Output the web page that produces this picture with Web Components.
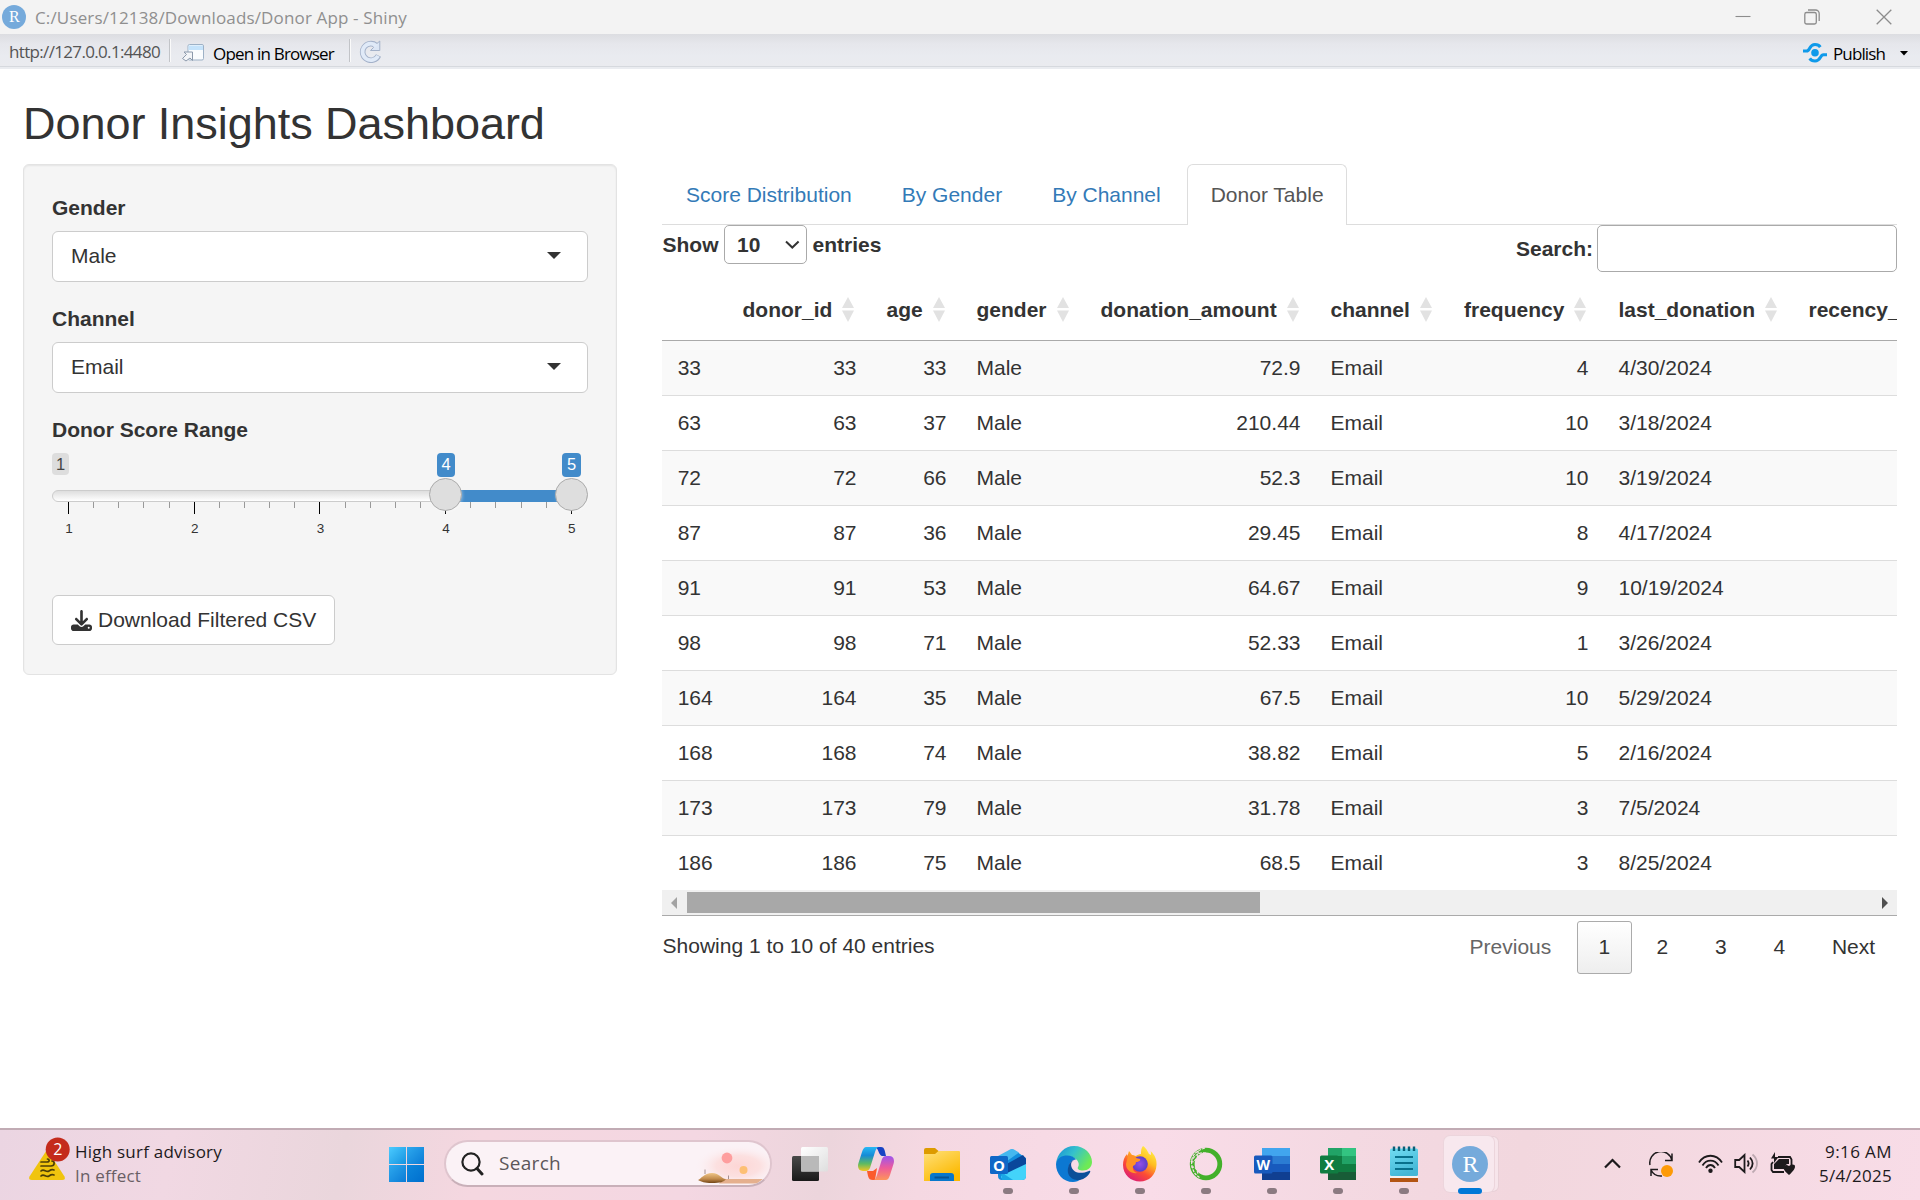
<!DOCTYPE html>
<html lang="en">
<head>
<meta charset="utf-8">
<title>Donor App - Shiny</title>
<style>
html,body{margin:0;padding:0;background:#fff}
body{width:1920px;height:1200px;overflow:hidden;font-family:"Liberation Sans",Arial,sans-serif;color:#333}
</style>
</head>
<body>
<app-window></app-window>
<script>
function define(name, css, html, setup) {
  const tpl = document.createElement('template');
  tpl.innerHTML = `<style>*{box-sizing:border-box}:host{display:block;box-sizing:border-box}svg{display:block}${css}</style>${html}`;
  customElements.define(name, class extends HTMLElement {
    connectedCallback() {
      if (this.shadowRoot) return;
      const root = this.attachShadow({mode: 'open'});
      root.appendChild(tpl.content.cloneNode(true));
      if (setup) setup.call(this, root);
    }
  });
}

/* One line of system text, letter-spaced to a fixed advance width. */
define('ui-text', `
:host{display:block;white-space:nowrap;font-family:"Open Sans","Noto Sans",sans-serif;font-size:17px;line-height:24px;flex:none}
span{display:inline-block}`, `<span><slot></slot></span>`, function (root) {
  const w = +this.getAttribute('w'), span = root.querySelector('span');
  const n = this.textContent.length;
  this.style.width = w + 'px';
  span.style.letterSpacing = ((w - span.getBoundingClientRect().width) / n) + 'px';
});

define('r-logo', `:host{flex:none}svg{width:100%;height:100%}`, `
<svg viewBox="0 0 36 36"><circle cx="18" cy="18" r="18" fill="#75aadb"/>
<text x="18.5" y="26" text-anchor="middle" font-family="Liberation Serif" font-size="24" fill="#fff">R</text></svg>`);

define('title-bar', `
:host{display:flex;height:34px;background:#f3f3f3;align-items:center;padding:0 29px 0 2px}
r-logo{width:24px;height:24px;margin-bottom:1px}
ui-text{margin-left:9px;color:#8f8f8f;position:relative;top:1px}
.ctl{margin-left:auto;display:flex;gap:54px;margin-bottom:1px}
svg{width:16px;height:16px;fill:none;stroke:#8c8c8c;stroke-width:1.1}`, `
<r-logo></r-logo><ui-text w="372">C:/Users/12138/Downloads/Donor App - Shiny</ui-text>
<div class="ctl">
<svg viewBox="0 0 16 16"><path d="M.5 7.5h15"/></svg>
<svg viewBox="0 0 16 16" style="margin-right:2px;margin-left:-1px"><rect x=".8" y="3.5" width="11.5" height="11.5" rx="1.8" stroke-width="1.3"/><path stroke-width="1.3" d="M4 1h7.5a3.7 3.7 0 0 1 3.7 3.7V12"/></svg>
<svg viewBox="0 0 16 16" style="margin-right:-1px"><path stroke-width="1.3" d="M.7.7l14.6 14.6M15.3.7L.7 15.3"/></svg>
</div>`);

define('tool-bar', `
:host{display:flex;height:35px;background:linear-gradient(#dcdde1 0,#e6e7ec 10px,#e9ebf0 22px,#eaebef 32px,#d6d9de 32px,#d6d9de 33px,#eaecf0 33px);align-items:flex-start}
ui-text{color:#000}
.url{margin:6px 0 0 9px;color:#555}
i{width:2px;height:23px;margin:5px 0 0 9px;background:linear-gradient(90deg,#c2c4c8 50%,#fafafa 50%);flex:none}
svg{flex:none}`, `
<ui-text class="url" w="151">http://127.0.0.1:4480</ui-text><i></i>
<svg style="margin:9px 0 0 10px" width="24" height="20" viewBox="0 0 24 20"><rect x="7" y="1.5" width="15.500" height="15.500" rx="1.500" fill="#fafcfe" stroke="#9db1c6"/><path d="M7.500 2.500h14.500v4.500H7.500z" fill="#c5e3fb"/><path d="M1.500 15.500l4-4-2.500-2.500h8.500v8.500L9 15l-4 3z" fill="#f3f5f8" stroke="#8c99ab"/></svg>
<ui-text w="121" style="margin:8px 0 0 8px">Open in Browser</ui-text><i style="margin-left:15px"></i>
<svg style="margin:6px 0 0 8px" width="23" height="23" viewBox="0 0 23 23"><path d="M17.200 5.500A8.300 8.300 0 1 0 19.500 15.500" fill="none" stroke="#a3b1c9" stroke-width="5.600"/><path d="M20.800 1v9.500h-9.300l3-3-1.500-2 4-1.200z" fill="#dce6f5" stroke="#a3b1c9"/><path d="M17.700 6A8.300 8.300 0 1 0 19.100 15.900" fill="none" stroke="#e0eaf8" stroke-width="3.800"/></svg>
<svg style="margin:8px 0 0 auto" width="26" height="22" viewBox="0 0 26 22"><circle cx="13" cy="10.800" r="3.800" fill="#0f9aea"/><g fill="none" stroke="#0f9aea" stroke-width="3"><path d="M1 9h3.500c1.500 0 2.200-.8 3-2.500C9 3.500 11 2.500 13 2.500c2.200 0 4.200.8 5.300 2.600"/><path d="M25 12.800h-3.500c-1.500 0-2.200.8-3 2.500-1.500 2.700-3.500 3.700-5.500 3.700-2.200 0-4.200-.8-5.300-2.600"/></g></svg>
<ui-text w="52" style="margin:8px 0 0 5px">Publish</ui-text>
<svg style="margin:17px 12px 0 15px" width="8" height="5"><path d="M0 0h8L4 4.500z"/></svg>`);

define('select-input', `
:host{margin-bottom:22px;font-size:21px;line-height:30px}
label{display:block;font-weight:700;margin-bottom:8px}
div{display:flex;justify-content:space-between;align-items:center;height:51px;background:#fff;border:1px solid #ccc;border-radius:6px;padding:0 26px 2px 18px}`, `
<label></label><div><slot></slot><svg width="14" height="7"><path d="M0 0h14L7 7z" fill="#333"/></svg></div>`, function (root) {
  root.querySelector('label').textContent = this.getAttribute('label');
});

define('range-slider', `
:host{font-size:21px;line-height:30px;height:180px}
label{display:block;font-weight:700;margin-bottom:8px}
.rs{position:relative;height:90px;width:536px}
.rs>*{position:absolute}
.tag{top:0;font-size:16.5px;line-height:22px;height:22px;border-radius:4px;text-align:center;width:17px;background:#ddd;color:#444}
.v{background:#428bca;color:#fff;height:24px;line-height:23px;width:18px}
.track{top:37px;left:0;width:536px;height:12px;border:1px solid #ccc;border-radius:8px;background:linear-gradient(#dedede,#fff)}
.bar{top:37px;left:394px;width:126px;height:12px;background:#428bca}
.h{top:25px;width:33px;height:33px;border-radius:50%;background:#dedede;border:1px solid #ababab;box-shadow:1px 1px 3px rgba(255,255,255,.3)}
.t{top:49px;width:1px;height:6px;background:#999}
.t.b{height:12px;background:#000}
.n{top:66px;width:20px;text-align:center;font-size:13.5px;line-height:20px}`, `
<label>Donor Score Range</label><div class="rs"><span class="tag" style="left:0">1</span>
<span class="tag v" style="left:385px">4</span><span class="tag v" style="left:510px;width:19px">5</span>
<div class="track"></div><div class="bar"></div></div>`, function (root) {
  const rs = root.querySelector('.rs');
  const add = (cls, left, text) => { const e = document.createElement('span'); e.className = cls; e.style.left = left + 'px'; e.textContent = text || ''; rs.append(e); };
  for (let i = 0; i <= 20; i++) {
    const x = 16.5 + i * 125.7 / 5;
    add(i % 5 ? 't' : 't b', Math.round(x - .5));
    if (i % 5 === 0) add('n', x - 9.5, String(1 + i / 5));
  }
  add('h', 377); add('h', 503);
});

define('side-panel', `
:host{width:594px;height:511px;background:#f5f5f5;border:1px solid #e3e3e3;border-radius:6px;padding:28px;box-shadow:inset 0 1px 2px rgba(0,0,0,.07);flex:none}
button{display:flex;align-items:center;height:50px;width:283px;border:1px solid #ccc;border-radius:6px;background:#fff;font:21px/30px "Liberation Sans",Arial,sans-serif;color:#333;padding:0 0 0 18px;gap:6px;white-space:nowrap}`, `
<select-input label="Gender">Male</select-input><select-input label="Channel">Email</select-input>
<range-slider></range-slider>
<button><svg width="21" height="21" viewBox="0 0 512 512" fill="#333"><path d="M288 32c0-17.700-14.300-32-32-32s-32 14.300-32 32v242.700l-73.400-73.400c-12.500-12.500-32.800-12.500-45.300 0s-12.500 32.800 0 45.300l128 128c12.500 12.500 32.800 12.500 45.300 0l128-128c12.500-12.500 12.500-32.800 0-45.300s-32.800-12.500-45.300 0L288 274.700V32zM64 352c-35.300 0-64 28.700-64 64v32c0 35.300 28.700 64 64 64h384c35.300 0 64-28.700 64-64v-32c0-35.300-28.700-64-64-64H346.500l-45.300 45.300c-25 25-65.500 25-90.500 0L165.500 352H64zm368 56a24 24 0 1 1 0 48 24 24 0 1 1 0-48z"/></svg><span>Download Filtered CSV</span></button>`);

define('tab-strip', `
:host{display:flex;gap:3px;height:61px;box-shadow:inset 0 -1px #ddd;font-size:21px;line-height:30px}
a{padding:15px 22px 15px 23px;border:1px solid transparent;border-bottom:0;color:#337ab7;white-space:nowrap}
a.on{color:#555;background:#fff;border-color:#ddd;border-radius:6px 6px 0 0}`, `
<a>Score Distribution</a><a>By Gender</a><a>By Channel</a><a class="on">Donor Table</a>`);

define('sort-icon', `:host{display:inline-block;width:12px;height:25px}`, `
<svg width="12" height="25"><path d="M0 11L6 0l6 11zM0 13.500h12L6 25z" fill="#e2e2e2"/></svg>`);

define('donor-table', `
:host{font-size:21px;line-height:30px}
.top{display:flex;justify-content:space-between;align-items:flex-start;height:47px;font-weight:700;padding-left:.5px}
.len,.find{display:flex;align-items:center;gap:5.5px}
.len{height:39px}.find{height:47px;gap:4px}
.sel{display:flex;align-items:center;justify-content:space-between;width:83px;height:39px;border:1px solid #aaa;border-radius:5px;padding:0 6px 0 12px}
.box{width:300px;height:47px;border:1px solid #aaa;border-radius:5px;background:#fff}
.view{width:1235px;overflow:hidden;border-bottom:1px solid #aaa}
table{border-collapse:separate;border-spacing:0;table-layout:fixed;width:1459.5px}
th{padding:23px 0 15px 15px;text-align:left;border-bottom:1px solid #aaa;white-space:nowrap;height:69px}
.hd{display:flex;align-items:center;gap:10px;height:30px}
sort-icon{margin-top:-1px}
td{padding:12px 15px;border-bottom:1px solid #ddd;height:55px}
td:first-child{padding-left:15.700px}
tr:last-child td{border-bottom:0;height:54px}
tbody tr:nth-child(odd){background:#f9f9f9}
.r{text-align:right}
.bar{display:flex;align-items:center;justify-content:space-between;height:25px;background:#f0f0f0;padding:0 9px}
.thumb{width:573px;height:21px;background:#a8a8a8;margin:0 auto 0 10px}
.foot{display:flex;justify-content:space-between;padding-top:5px}
.info{padding:9.500px 0 0 .6px}
.pg{display:flex;gap:3px}
.pg a{height:53px;padding:10px 20.900px;border:1px solid transparent;border-radius:3px}
.pg a.off{color:#666;margin-right:1px}
.pg a.on{border-color:#ababab;background:linear-gradient(#fff,#eee);padding:10px 20.400px}`, `
<div class="top"><div class="len"><span>Show</span><div class="sel"><span>10</span><svg width="15" height="9"><path d="M1 1.500l6.300 6 6.300-6" fill="none" stroke="#333" stroke-width="2"/></svg></div><span>entries</span></div>
<div class="find"><span>Search:</span><div class="box"></div></div></div>
<div class="view"><table><colgroup></colgroup><thead><tr></tr></thead><tbody></tbody></table>
<div class="bar"><svg width="6" height="12"><path d="M6 0v12L0 6z" fill="#a3a3a3"/></svg><div class="thumb"></div><svg width="6" height="12"><path d="M0 0v12l6-6z" fill="#505050"/></svg></div></div>
<div class="foot"><div class="info">Showing 1 to 10 of 40 entries</div><div class="pg"><a class="off">Previous</a><a class="on">1</a><a>2</a><a>3</a><a>4</a><a>Next</a></div></div>`, function (root) {
  const cols = [['', 65.5], ['donor_id', 144], ['age', 90], ['gender', 124], ['donation_amount', 230], ['channel', 133.5], ['frequency', 154.5], ['last_donation', 190], ['recency_', 328]];
  root.querySelector('colgroup').innerHTML = cols.map(c => `<col style="width:${c[1]}px">`).join('');
  root.querySelector('thead tr').innerHTML = cols.map(c => `<th><div class="hd">${c[0] ? `<span>${c[0]}</span>${c[0] === 'recency_' ? '' : '<sort-icon></sort-icon>'}` : ''}</div></th>`).join('');
  const rows = [[33,33,'72.9',4,'4/30/2024'],[63,37,'210.44',10,'3/18/2024'],[72,66,'52.3',10,'3/19/2024'],[87,36,'29.45',8,'4/17/2024'],[91,53,'64.67',9,'10/19/2024'],[98,71,'52.33',1,'3/26/2024'],[164,35,'67.5',10,'5/29/2024'],[168,74,'38.82',5,'2/16/2024'],[173,79,'31.78',3,'7/5/2024'],[186,75,'68.5',3,'8/25/2024']];
  root.querySelector('tbody').innerHTML = rows.map(([id, age, amt, f, d]) => `<tr><td>${id}</td><td class="r">${id}</td><td class="r">${age}</td><td>Male</td><td class="r">${amt}</td><td>Email</td><td class="r">${f}</td><td>${d}</td><td></td></tr>`).join('');
});

define('shiny-page', `
:host{height:1059px;padding:30px 23px 0;background:#fff}
h2{margin:0 0 15px;font-size:45px;line-height:50px;font-weight:400;color:#333;letter-spacing:-.04px}
.row{display:flex;gap:45px;align-items:flex-start}
main{width:1235px}`, `
<h2>Donor Insights Dashboard</h2><div class="row"><side-panel></side-panel><main><tab-strip></tab-strip><donor-table></donor-table></main></div>`);

define('search-pill', `
:host{display:flex;align-items:center;width:328px;height:47px;border:2px solid #dfc5ce;border-bottom-color:#c9b0b9;border-radius:24px;background:#fbf2f6;overflow:hidden;padding-left:15px;flex:none}
ui-text{font-size:19px;color:#5c5659;margin:-2px auto 0 15px}`, `
<svg width="23" height="24" viewBox="0 0 23 24"><circle cx="10" cy="10" r="8.600" fill="none" stroke="#222" stroke-width="2.200"/><path d="M16 16.500l5 5.500" stroke="#222" stroke-width="3" stroke-linecap="round"/></svg>
<ui-text w="62">Search</ui-text>
<svg width="76" height="43" viewBox="0 0 76 43"><defs><radialGradient id="g"><stop offset="0" stop-color="#fdd6d5"/><stop offset=".5" stop-color="#fce0e0"/><stop offset="1" stop-color="#fbf2f6" stop-opacity="0"/></radialGradient><linearGradient id="s" x2="0" y2="1"><stop stop-color="#efc588"/><stop offset=".6" stop-color="#c18a4b"/><stop offset="1" stop-color="#714517"/></linearGradient></defs>
<ellipse cx="44" cy="24" rx="44" ry="21" fill="url(#g)"/><circle cx="33" cy="16" r="5.400" fill="#fe9e9e"/><circle cx="49.500" cy="28" r="4" fill="#fdbf74"/><path d="M29 37h40l-6 4.500H25z" fill="#e5b08e"/><path d="M4 38c3-1 6-7 14-7s9 6 14 6c-2 3-6 4-14 4-8 0-10-1-14-3z" fill="url(#s)"/><path d="M11 32v-4.500M34.500 37v-3.500" stroke="#a49090"/></svg>`);

/* A taskbar slot: icon above a running mark. */
define('task-icon', `
:host{display:flex;width:66px;height:70px;flex:none;flex-direction:column;align-items:center;padding-top:16px}
.tile{display:flex;align-items:center;justify-content:center;width:36px;height:36px}
i{width:10px;height:6px;border-radius:3px;margin-top:5.500px;background:transparent}
:host([run]) i{background:#8b7a81}
:host([active]) i{width:24px;background:#0078d7}
:host([active]) .box{background:#f8e8ee;border-radius:6px;padding:10px 7px 0;margin:-10px 3px 0 0;height:56px;box-shadow:0 0 0 1px #ecd5dc,5px 0 0 -1px #f7e5eb,5px 0 0 #e8d0d7}
:host([active]) .tile{position:relative;left:1.5px}
:host([active]) i{margin-top:-4.500px;position:relative}`, `
<div class="box"><div class="tile"><slot></slot></div></div><i></i>`);

define('weather-widget', `
:host{display:flex;width:389px;padding:14px 0 0 28px;gap:9px;flex:none}
svg{overflow:visible;flex:none}
ui-text{color:#1d1a1c}.s{color:#695f65}`, `
<svg width="42" height="44" viewBox="0 0 42 44"><path d="M17.500 8L1.500 32.500Q0 36 4 36H34q4 0 2.500-3.500L20.500 8q-1.500-2-3 0z" fill="#f0c40e"/><g fill="none" stroke="#4c3e07" stroke-width="1.700" stroke-linecap="round"><path d="M13 22h10c4 0 4-5 1-5M13 18h6c3 0 2.500-3 .5-3M13 27c3-3 5 2 8 0s3-1.500 5-1M13 32c3-3 5 2 8 0s3-1.500 5-1"/></g><circle cx="29.700" cy="5.500" r="12" fill="#c42b1c"/><text x="29.900" y="11.300" font-family="Open Sans" font-size="16" text-anchor="middle" fill="#fff">2</text></svg>
<div style="margin:-4px 0 0 -4px"><ui-text w="147">High surf advisory</ui-text><ui-text w="66" class="s">In effect</ui-text></div>`);

define('system-tray', `
:host{display:flex;align-items:flex-start;margin-left:auto;padding-right:28px;height:70px;flex:none}
svg{flex:none;fill:none;stroke:#1d1a1c;stroke-width:1.800}
.c{display:flex;flex-direction:column;align-items:flex-end;margin:10px 0 0 23px;width:73px}
ui-text{color:#1d1a1c}`, `
<svg style="margin:28px 28px 0 0" width="17" height="11"><path d="M1 9.500l7.500-7.500 7.500 7.500" stroke-width="2.200"/></svg>
<svg style="margin:22px 24px 0 0" width="25" height="26"><path stroke-width="1.500" d="M1 13A11 11 0 0 1 23 8.500M23 1.500v7h-7M2 24v-6.500h7M2 18c2 4 6 6.500 11 6"/><circle cx="18" cy="19" r="6" fill="#fd9a07" stroke="none"/></svg>
<svg style="margin:24px 11px 0 0" width="25" height="20"><path d="M1 8.500C7-.5 18-.5 24 8.500M4.500 11.500c4-6.500 12-6.500 16 0M8 14c2.500-4 6.500-4 9 0"/><circle cx="12.500" cy="16.800" r="2.200" fill="#1d1a1c" stroke="none"/></svg>
<svg style="margin:23px 11px 0 0" width="25" height="22"><path d="M1.200 7v7h4L10.500 19V2L5.200 7zM13.500 7.500c1.500 2 1.500 4 0 6M16 4.500c3.500 4 3.500 8 0 12"/><path stroke="#bda9b1" d="M18.500 1.500c6 5 6 13 0 18"/></svg>
<svg style="margin:22px 0 0 0" width="26" height="25"><path d="M8 5h12l1.500 2.500V13M3 10L1.500 12v6L3 20h11"/><path d="M9 7h10v5c-3 0-5 2-5 5H4v-5z" fill="#1d1a1c" stroke="none"/><path d="M5 0v5H8.500L4 11V6.500H1zM24.500 13q-2.500-1.200-5.500 1-3-2-5 0c-2 3 2 6 5 9 3-3 7.500-7 5.500-10z" fill="#1d1a1c" stroke="none"/></svg>
<div class="c"><ui-text w="67">9:16 AM</ui-text><ui-text w="73">5/4/2025</ui-text></div>`);

define('task-bar', `
:host{display:flex;height:72px;border-top:2px solid #c1abb4;align-items:flex-start;background:linear-gradient(100deg,#ebd5e2 0,#f1d8e3 9%,#ead6dc 18%,#f5d7e0 25%,#f4d7e2 36%,#ecd5dc 43%,#f5d8e2 48%,#f9dce8 60%,#f4d9e2 70%,#f2d7de 79%,#f8dce7 100%)}
.start{display:grid;grid-template-columns:17px 17px;gap:1px;margin:17px 20px 0 0;flex:none}
.start b{height:17px;background:linear-gradient(135deg,#4ccbff,#1593e0)}
.start b:nth-child(2),.start b:nth-child(3){background:linear-gradient(135deg,#2ea9ee,#0a7bd6)}
.start b:nth-child(4){background:linear-gradient(135deg,#0d87dc,#006fce)}
search-pill{margin:10px 5px 0 0}
r-logo{width:36px;height:36px}`, `
<weather-widget></weather-widget><div class="start"><b></b><b></b><b></b><b></b></div><search-pill></search-pill>
<task-icon><svg width="36" height="36" viewBox="0 0 36 36"><defs><linearGradient id="d" x2="0" y2="1"><stop stop-color="#494949"/><stop offset="1" stop-color="#191919"/></linearGradient><linearGradient id="w" x2="1" y2="1"><stop stop-color="#fff"/><stop offset="1" stop-color="#dedede"/></linearGradient></defs><rect y="10" width="27" height="25" rx="1.500" fill="url(#d)"/><rect x="9" y="1" width="27" height="24.500" rx="1.500" fill="url(#w)"/><path d="M9 10h18v15.500H9z" fill="#b9b9b9"/></svg></task-icon>
<task-icon><svg width="36" height="36" viewBox="0 0 36 36"><defs><linearGradient id="a" x2="0" y2="1"><stop stop-color="#27b8f5"/><stop offset=".35" stop-color="#168bd6"/><stop offset=".7" stop-color="#5fbb61"/><stop offset="1" stop-color="#f4c522"/></linearGradient><linearGradient id="b" x2="0" y2="1"><stop stop-color="#9c54ee"/><stop offset=".5" stop-color="#ee5b9a"/><stop offset="1" stop-color="#fd955a"/></linearGradient></defs><path d="M17 1h6c2 0 3 1 3.700 3.500L28 10h-4c-3 0-4-9-7-9z" fill="#1743c4"/><path d="M9 25h6l4-3-2 12h-2c-3 0-4-1-5-4z" fill="#fb5b2c"/><path d="M8.500 1H21c-2 0-3 2-4 5l-5 16c-1 2-2 3-4 3H5c-4 0-6-3-4.500-8L4 6c1-3 2-5 4.500-5z" fill="url(#a)"/><path d="M27.500 34H15c2 0 3-2 4-5l5-16c1-2 2-3 4-3h3c4 0 6 3 4.500 8L32 29c-1 3-2 5-4.500 5z" fill="url(#b)"/></svg></task-icon>
<task-icon><svg width="36" height="36" viewBox="0 0 36 36"><defs><linearGradient id="f" x2=".6" y2="1"><stop stop-color="#ffe07a"/><stop offset="1" stop-color="#fcb900"/></linearGradient></defs><path d="M0 4q0-2 2-2h9l4 3.500L11 9H0z" fill="#dd9b00"/><path d="M0 8h11l3.500-3H35q1 0 1 1v29H0z" fill="url(#f)"/><path d="M6 35V30q0-3 3-3h18q3 0 3 3v5z" fill="#0877cb"/><path d="M10.500 31.500h14.500" stroke="#065494" stroke-width="2"/></svg></task-icon>
<task-icon run><svg width="36" height="36" viewBox="0 0 36 36"><path d="M8 13L20 4q2-1.500 4 0L36 12v18q0 4-4 4H12q-4 0-4-4z" fill="#138ddc"/><path d="M8 10l12-6.500q2-1 4 0l5 3L10 20z" fill="#46b8ee"/><path d="M13 20L33 9l3 4v8L18 31z" fill="#0a479b"/><path d="M36 18v12q0 4-4 4H14q-3-1-3-4z" fill="#43d3fa"/><path d="M11 26l12 8H12z" fill="#1aa7e5"/><rect y="10" width="18" height="18" rx="1.500" fill="#0f68c7"/><text x="9" y="24.500" text-anchor="middle" font-family="Open Sans" font-weight="700" font-size="15" fill="#fff">O</text></svg></task-icon>
<task-icon run><svg width="36" height="36" viewBox="0 0 36 36"><defs><linearGradient id="e" x2="1" y2=".5"><stop stop-color="#168cd8"/><stop offset=".5" stop-color="#35c1cc"/><stop offset="1" stop-color="#6eea55"/></linearGradient></defs><path d="M0 18C1 7 9 0 18 0c11 0 18 8 18 16 0 5-4 8.500-9 8.500-4 0-6-1.500-5-3.500 1.500-2 1-6-3-8.500C12 8 3 11 0 18z" fill="url(#e)"/><path d="M0 18c1-6 6-8.500 11-8.500 4 0 7 1.500 9 4-5 0-8 5-7 10 1 6 7 10 12 9.500-2 2-5 3-8 3C7 36 0 28 0 18z" fill="#0c78d2"/><path d="M19.500 13.500c-4 1-5 4-4 7.500 1.500 5 8 8 17.500 4 1.500-.5 1.500.5 1 1.500-3 5-8 8-13 7.500C13 33 11 27 12 22c1-5 4-8.500 7.500-8.500z" fill="#0c4f99"/></svg></task-icon>
<task-icon run><svg width="36" height="36" viewBox="0 0 36 36"><defs><linearGradient id="x" x1=".8" x2=".2" y2="1"><stop stop-color="#fff44f"/><stop offset=".35" stop-color="#ffbd1f"/><stop offset=".65" stop-color="#fc4c34"/><stop offset="1" stop-color="#d7167f"/></linearGradient><radialGradient id="y"><stop stop-color="#9350e8"/><stop offset="1" stop-color="#5c3dc9"/></radialGradient></defs><path d="M21 0c4 3 5 6 6 8l2 1c0-2 0-3-.5-4C33 9 35 14 34.500 19 34 29 27 35.500 18 35.500S1 29 1 19c0-4 1-8 4-11l.5 2L7 5l3 4c2 0 3 1 4 1 1-1 3-2 5-2 0-3 0-6 2-8z" fill="url(#x)"/><circle cx="18" cy="18" r="7.800" fill="url(#y)"/><path d="M6 10c3-2 6-1 8 2l4 1c1 1-1 3-4 3 0 2-1 3-3 4-1 4 2 7 5 7-7 1-12-3-12-9z" fill="#ff9126"/></svg></task-icon>
<task-icon run><svg width="34" height="34" viewBox="0 0 34 34"><circle cx="17" cy="17" r="13.800" fill="none" stroke="#43b02a" stroke-width="4.800"/><path d="M16 1C6 4 1 10 3 19s5 9 8 12M17 6C9 5 5 9 2 15M9 4c1 5-2 10-6 11M2 20c4-1 6 2 7 7" fill="none" stroke="#f9dce8" stroke-width="1.200" stroke-dasharray="3 1"/></svg></task-icon>
<task-icon run><svg width="36" height="36" viewBox="0 0 36 36"><path d="M8 2h28v8.500H8z" fill="#41a5ee"/><path d="M8 10h28v8H8z" fill="#2b7cd3"/><path d="M8 18h28v8H8z" fill="#185abd"/><path d="M8 26h28v8H8z" fill="#103f91"/><rect y="9.500" width="18.500" height="18" rx="1.500" fill="#185abd"/><text x="9.200" y="24" text-anchor="middle" font-family="Open Sans" font-weight="700" font-size="14" fill="#fff">W</text></svg></task-icon>
<task-icon run><svg width="36" height="36" viewBox="0 0 36 36"><path d="M8 2h28v32H8z" fill="#185c37"/><path d="M8 2h14v8.500H8z" fill="#21a366"/><path d="M22 2h14v8.500H22z" fill="#33c481"/><path d="M8 10h14v16H8z" fill="#107c41"/><path d="M22 10h14v8H22z" fill="#21a366"/><path d="M22 18h14v8H22z" fill="#107c41"/><rect y="9.500" width="18.500" height="18" rx="1.500" fill="#107c41"/><text x="9.200" y="24" text-anchor="middle" font-family="Open Sans" font-weight="700" font-size="15" fill="#fff">X</text></svg></task-icon>
<task-icon run><svg width="36" height="36" viewBox="0 0 36 36"><defs><linearGradient id="n" x2=".4" y2="1"><stop stop-color="#71dcf2"/><stop offset="1" stop-color="#43b7d6"/></linearGradient></defs><path d="M4 30h28v6H4z" fill="#b35413"/><path d="M4 29h28v3H4z" fill="#f5f1ee"/><rect x="4" y="2.500" width="28" height="27.500" rx="1.500" fill="url(#n)"/><path d="M8 .5v4.500M13 .5v4.500M18 .5v4.500M23 .5v4.500M28 .5v4.500" stroke="#086078" stroke-width="2.400"/><path d="M9 11h18M9 17h18M9 23h18" stroke="#08708c" stroke-width="2"/></svg></task-icon>
<task-icon active><r-logo></r-logo></task-icon>
<system-tray></system-tray>`);

define('app-window', `:host{display:flex;flex-direction:column;width:1920px;height:1200px;font-family:"Liberation Sans",Arial,sans-serif;color:#333}`, `
<title-bar></title-bar><tool-bar></tool-bar><shiny-page></shiny-page><task-bar></task-bar>`);
</script>
</body>
</html>
